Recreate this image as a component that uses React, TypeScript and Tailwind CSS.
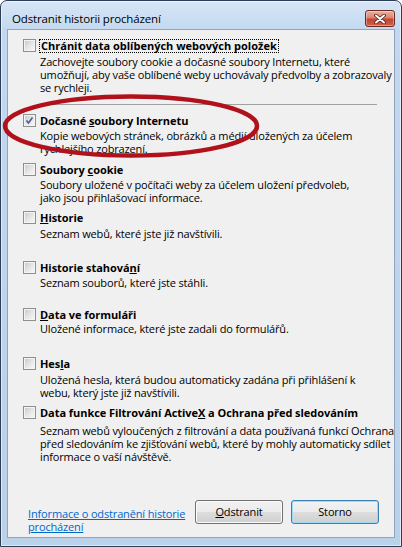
import React from 'react';

type Item = {
  title: React.ReactNode;
  lines: string[];
  checked?: boolean;
  focused?: boolean;
  mt: string;
  dmt: string;
};

const items: Item[] = [
  {
    title: 'Chránit data oblíbených webových položek',
    lines: [
      'Zachovejte soubory cookie a dočasné soubory Internetu, které',
      'umožňují, aby vaše oblíbené weby uchovávaly předvolby a zobrazovaly',
      'se rychleji.',
    ],
    focused: true,
    mt: 'mt-0',
    dmt: 'mt-[2px]',
  },
  {
    title: (
      <>
        Dočasné <u>s</u>oubory Internetu
      </>
    ),
    lines: ['Kopie webových stránek, obrázků a médií uložených za účelem', 'rychlejšího zobrazení.'],
    checked: true,
    mt: 'mt-[8px]',
    dmt: 'mt-[1px]',
  },
  {
    title: (
      <>
        Soubory <u>c</u>ookie
      </>
    ),
    lines: ['Soubory uložené v počítači weby za účelem uložení předvoleb,', 'jako jsou přihlašovací informace.'],
    mt: 'mt-[7px]',
    dmt: 'mt-[1px]',
  },
  {
    title: (
      <>
        <u>H</u>istorie
      </>
    ),
    lines: ['Seznam webů, které jste již navštívili.'],
    mt: 'mt-[6px]',
    dmt: 'mt-[2px]',
  },
  {
    title: (
      <>
        Historie stahová<u>n</u>í
      </>
    ),
    lines: ['Seznam souborů, které jste stáhli.'],
    mt: 'mt-[20px]',
    dmt: 'mt-[1px]',
  },
  {
    title: (
      <>
        <u>D</u>ata ve formuláři
      </>
    ),
    lines: ['Uložené informace, které jste zadali do formulářů.'],
    mt: 'mt-[18px]',
    dmt: 'mt-0',
  },
  {
    title: (
      <>
        Hes<u>l</u>a
      </>
    ),
    lines: ['Uložená hesla, která budou automaticky zadána při přihlášení k', 'webu, který jste již navštívili.'],
    mt: 'mt-[21px]',
    dmt: 'mt-[2px]',
  },
  {
    title: (
      <>
        Data funkce Filtrování Active<u>X</u> a Ochrana před sledováním
      </>
    ),
    lines: [
      'Seznam webů vyloučených z filtrování a data používaná funkcí Ochrana',
      'před sledováním ke zjišťování webů, které by mohly automaticky sdílet',
      'informace o vaší návštěvě.',
    ],
    mt: 'mt-[6px]',
    dmt: 'mt-[4px]',
  },
];

function Checkbox({ checked }: { checked?: boolean }) {
  return (
    <div className="relative h-[13px] w-[13px] shrink-0 border border-[#8e8f8f] bg-[#f4f4f4]">
      <div className="absolute inset-[1px] bg-[linear-gradient(135deg,#c9ccd1_0%,#e6e7e9_55%,#f6f6f6_100%)]" />
      {checked && (
        <svg className="absolute left-[1px] top-[1px]" width="9" height="9" viewBox="0 0 9 9">
          <path d="M1.5 4.5 L3.5 7 L7.5 1.5" fill="none" stroke="#4a5d8f" strokeWidth="1.6" />
        </svg>
      )}
    </div>
  );
}

export default function App() {
  return (
    <div className="relative h-[547px] w-[402px] overflow-hidden font-['Open_Sans','Noto_Sans',sans-serif] text-[11px] tracking-[-0.15px] text-black">
      <div className="flex h-full w-full flex-col rounded-t-[7px] border border-[#2c3d55] bg-[linear-gradient(180deg,#d7e6f6_0%,#c3d8ef_30px,#bad1ea_100%)] px-[6px] pb-[8px] shadow-[inset_0_0_0_1px_rgba(255,255,255,0.55)]">
        {/* title bar */}
        <div className="flex h-[28px] shrink-0 items-start justify-between">
          <span className="pl-[5px] pt-[12px] text-[11.5px] leading-none">Odstranit historii procházení</span>
          <div className="mt-[9px] flex h-[17px] w-[30px] items-center justify-center rounded-[3px] border border-[#6b2a20] bg-[linear-gradient(180deg,#eab1a3_0%,#d98470_45%,#c64430_55%,#d0604a_100%)] shadow-[inset_0_0_0_1px_rgba(255,255,255,0.35)]">
            <svg width="12" height="10" viewBox="0 0 12 10">
              <path d="M2 1.5 L10 8.5 M10 1.5 L2 8.5" stroke="#4a1c16" strokeWidth="3.6" strokeLinecap="round" />
              <path d="M2 1.5 L10 8.5 M10 1.5 L2 8.5" stroke="#ffffff" strokeWidth="2" strokeLinecap="round" />
            </svg>
          </div>
        </div>

        {/* client area */}
        <div className="flex flex-1 flex-col border border-[#8fa4bf] bg-[#f0f0f0] pl-[15px] pr-[15px] pt-[8px]">
          {items.map((it, i) => (
            <React.Fragment key={i}>
              {i === 1 && <div className="ml-[17px] mt-[10px] h-px w-[337px] bg-[#a0a0a0]" />}
              <div className={it.mt}>
                <div className="flex h-[15px] items-center gap-[3px]">
                  <Checkbox checked={it.checked} />
                  <span
                    className={
                      it.focused
                        ? 'whitespace-nowrap border border-dotted border-black px-px text-[11px] font-bold leading-[12px] tracking-[0px]'
                        : 'whitespace-nowrap pl-[1px] text-[11px] font-bold leading-[15px] tracking-[-0.05px]'
                    }
                  >
                    {it.title}
                  </span>
                </div>
                <div className={`${it.dmt} pl-[17px] text-[11px] leading-[13px] whitespace-nowrap`}>
                  {it.lines.map((l, j) => (
                    <div key={j}>{l}</div>
                  ))}
                </div>
              </div>
            </React.Fragment>
          ))}

          {/* bottom row */}
          <div className="mt-auto flex items-start pb-[4px]">
            <a className="ml-[5px] mt-[7px] w-[165px] text-[11px] leading-[13px] text-[#0066cc] underline">
              Informace o odstranění historie procházení
            </a>
            <div className="ml-auto flex gap-[8px]">
              <button className="h-[24px] w-[88px] rounded-[3px] border border-[#707070] bg-[linear-gradient(180deg,#f2f2f2_0%,#ebebeb_50%,#dddddd_51%,#cfcfcf_100%)] text-[11px] shadow-[inset_0_0_0_1px_#fbfbfb]">
                <u>O</u>dstranit
              </button>
              <button className="h-[24px] w-[88px] rounded-[3px] border border-[#3c7fb1] bg-[linear-gradient(180deg,#f2f2f2_0%,#ebebeb_50%,#dddddd_51%,#cfcfcf_100%)] text-[11px] shadow-[inset_0_0_0_1px_#9fdaf7]">
                Storno
              </button>
            </div>
          </div>
        </div>
      </div>

      {/* hand-drawn red ellipse */}
      <svg className="pointer-events-none absolute left-0 top-0" width="402" height="547" viewBox="0 0 402 547">
        <ellipse cx="131" cy="126" rx="126" ry="29.5" fill="none" stroke="#b0111a" strokeWidth="4.5" />
      </svg>
    </div>
  );
}
